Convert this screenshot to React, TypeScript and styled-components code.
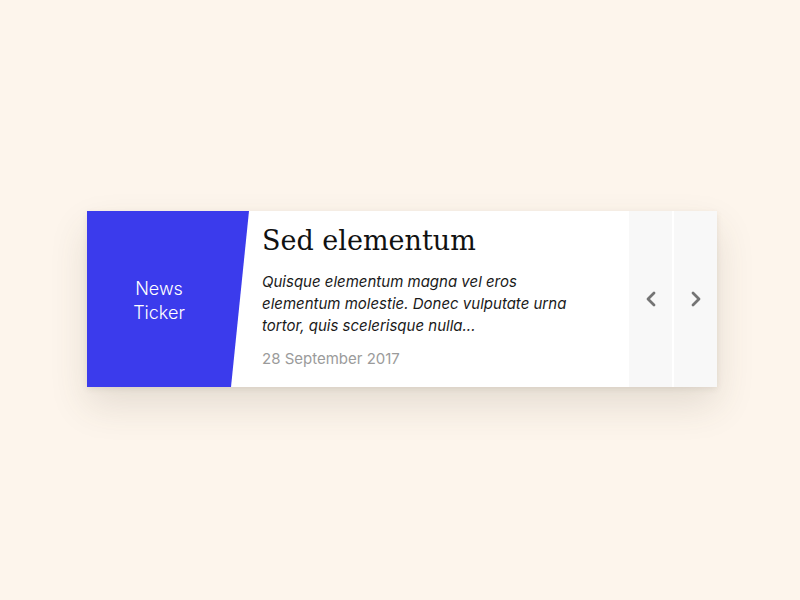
import React from 'react'
import styled, { createGlobalStyle } from 'styled-components'

const GlobalStyle = createGlobalStyle`
  html, body {
    margin: 0;
    padding: 0;
    background: #fdf5ec;
  }
`

const Page = styled.div`
  width: 100%;
  height: 600px;
  display: flex;
  align-items: center;
  justify-content: center;
  padding: 0 0 2px 4px;
  box-sizing: border-box;
`

const Card = styled.div`
  width: 630px;
  height: 176px;
  display: flex;
  background: #ffffff;
  box-shadow: 0 18px 36px rgba(80, 70, 50, 0.14), 0 2px 6px rgba(80, 70, 50, 0.1);
`

const Label = styled.div`
  width: 162px;
  flex-shrink: 0;
  padding: 4px 18px 0 0;
  box-sizing: border-box;
  background: #3b3bec;
  clip-path: polygon(0 0, 100% 0, calc(100% - 18px) 100%, 0 100%);
  display: flex;
  align-items: center;
  justify-content: center;
  text-align: center;
  color: #ffffff;
  font-family: Inter, 'Noto Sans', sans-serif;
  font-weight: 300;
  font-size: 18px;
  line-height: 24px;
`

const Content = styled.div`
  flex: 1;
  padding: 14px 40px 0 13px;
  box-sizing: border-box;
  display: flex;
  flex-direction: column;
`

const Title = styled.h2`
  margin: 0;
  font-family: 'DejaVu Serif', 'Liberation Serif', serif;
  font-weight: normal;
  font-size: 27px;
  line-height: 32px;
  color: #111111;
`

const Summary = styled.p`
  margin: 14px 0 0;
  font-family: Inter, 'Noto Sans', sans-serif;
  font-style: italic;
  font-size: 15px;
  line-height: 22px;
  color: #1a1a1a;
`

const DateText = styled.span`
  margin-top: 12px;
  font-family: Inter, 'Noto Sans', sans-serif;
  font-size: 15px;
  line-height: 20px;
  color: #9b9b9b;
`

const Controls = styled.div`
  display: flex;
  gap: 2px;
  background: #ffffff;
`

const NavButton = styled.button`
  width: 43px;
  height: 100%;
  border: none;
  padding: 0;
  margin: 0;
  background: #f8f8f8;
  color: #747474;
  display: flex;
  align-items: center;
  justify-content: center;
  cursor: pointer;
`

const Chevron = ({ dir }: { dir: 'left' | 'right' }) => (
  <svg width="12" height="16" viewBox="0 0 12 16" fill="none">
    <path
      d={dir === 'left' ? 'M9 2 L3 8 L9 14' : 'M3 2 L9 8 L3 14'}
      stroke="currentColor"
      strokeWidth="2.8"
      strokeLinecap="round"
      strokeLinejoin="round"
    />
  </svg>
)

const App = () => (
  <>
    <GlobalStyle />
    <Page>
      <Card>
        <Label>
          News
          <br />
          Ticker
        </Label>
        <Content>
          <Title>Sed elementum</Title>
          <Summary>
            Quisque elementum magna vel eros elementum molestie. Donec vulputate urna tortor, quis scelerisque nulla...
          </Summary>
          <DateText>28 September 2017</DateText>
        </Content>
        <Controls>
          <NavButton aria-label="Previous">
            <Chevron dir="left" />
          </NavButton>
          <NavButton aria-label="Next">
            <Chevron dir="right" />
          </NavButton>
        </Controls>
      </Card>
    </Page>
  </>
)

export default App
